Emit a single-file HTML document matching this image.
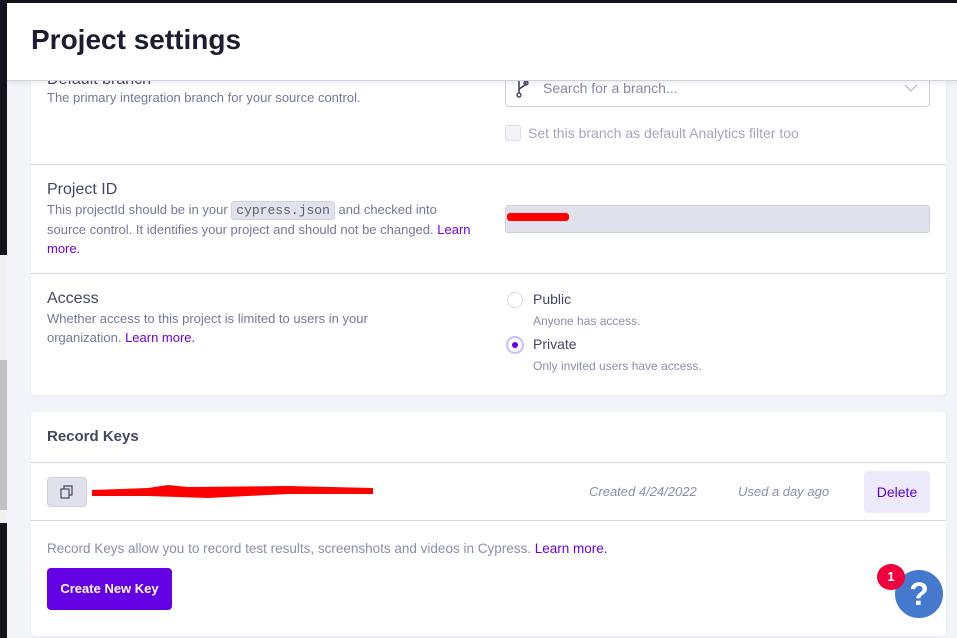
<!DOCTYPE html>
<html><head><style>
*{margin:0;padding:0;box-sizing:border-box}
body{width:957px;height:638px;overflow:hidden;background:#f3f4f9;font-family:"Liberation Sans",sans-serif;position:relative}
.a{position:absolute}
.t{color:#434861;font-size:16px}
.d{color:#747994;font-size:12.5px;line-height:19px}
.l{color:#6c00e5}
.hr{position:absolute;left:31px;width:915px;height:1px;background:#d5d6e6}
</style></head><body>
<div class="a" style="left:0;top:0;width:7px;height:255px;background:#14131d"></div>
<div class="a" style="left:0;top:255px;width:7px;height:268px;background:#f0f0f0"></div>
<div class="a" style="left:0;top:360px;width:7px;height:150px;background:#c1c1c1"></div>
<div class="a" style="left:0;top:523px;width:7px;height:115px;background:#14131d"></div>
<div class="a" style="left:0;top:0;width:957px;height:3px;background:#14131d"></div>

<div class="a" style="left:31px;top:60px;width:915px;height:335px;background:#fff;border-radius:4px;box-shadow:0 1px 2px rgba(0,0,0,.06)"></div>
<div class="a t" style="left:47px;top:71px">Default branch</div>
<div class="a d" style="left:47px;top:88px;font-size:13px">The primary integration branch for your source control.</div>
<div class="a" style="left:505px;top:66px;width:425px;height:41px;border:1px solid #cfd0df;border-radius:4px;background:#fff"></div>
<svg class="a" style="left:516px;top:80px" width="14" height="18" viewBox="0 0 14 18"><path d="M3 1v12M3 10c0-3 7-3 7-8" stroke="#434861" stroke-width="1.6" fill="none"/><circle cx="3" cy="15" r="2" stroke="#434861" stroke-width="1.4" fill="none"/><circle cx="10" cy="3" r="2" stroke="#434861" stroke-width="1.4" fill="none"/></svg>
<div class="a" style="left:543px;top:80px;color:#848aa4;font-size:14px">Search for a branch...</div>
<svg class="a" style="left:904px;top:83px" width="14" height="10"><path d="M1 2l6 6 6-6" stroke="#c8cad8" stroke-width="1.6" fill="none"/></svg>
<div class="a" style="left:505px;top:125px;width:16px;height:16px;border:1px solid #dcdde8;border-radius:3px;background:#f3f4f9"></div>
<div class="a" style="left:528px;top:125px;color:#a3a7bd;font-size:14px">Set this branch as default Analytics filter too</div>
<div class="hr" style="top:164px"></div>

<div class="a t" style="left:47px;top:181px">Project ID</div>
<div class="a d" style="left:47px;top:200px;width:430px;font-size:13px">This projectId should be in your <span style="font-family:'Liberation Mono',monospace;background:#e1e2ec;border:1px solid #d0d1df;border-radius:3px;padding:1px 4px;color:#5a5f78;font-size:13px">cypress.json</span> and checked into source control. It identifies your project and should not be changed. <span class="l">Learn more.</span></div>
<div class="a" style="left:505px;top:205px;width:425px;height:28px;background:#e1e1ec;border:1px solid #d0d1df;border-radius:3px"></div>
<div class="a" style="left:507px;top:213px;width:62px;height:8px;background:#f00;border-radius:3px"></div>
<div class="hr" style="top:273px"></div>

<div class="a t" style="left:47px;top:290px">Access</div>
<div class="a d" style="left:47px;top:309px;width:350px;font-size:13px">Whether access to this project is limited to users in your organization. <span class="l">Learn more.</span></div>
<div class="a" style="left:507px;top:292px;width:16px;height:16px;border:1px solid #d8d9e5;border-radius:50%"></div>
<div class="a t" style="left:533px;top:291px;font-size:14px">Public</div>
<div class="a d" style="left:533px;top:312px;font-size:12px;color:#8a8fa8">Anyone has access.</div>
<div class="a" style="left:506px;top:336px;width:18px;height:18px;border:2px solid #cdbef7;border-radius:50%;background:#fff"></div>
<div class="a" style="left:512px;top:342px;width:6px;height:6px;border-radius:50%;background:#6c00e5"></div>
<div class="a t" style="left:533px;top:336px;font-size:14px">Private</div>
<div class="a d" style="left:533px;top:357px;font-size:12px;color:#8a8fa8">Only invited users have access.</div>

<div class="a" style="left:31px;top:412px;width:915px;height:224px;background:#fff;border-radius:4px;box-shadow:0 1px 2px rgba(0,0,0,.06)"></div>
<div class="a" style="left:47px;top:428px;color:#434861;font-size:15px;font-weight:bold">Record Keys</div>
<div class="hr" style="top:462px"></div>
<div class="a" style="left:47px;top:477px;width:40px;height:30px;background:#e1e1ec;border:1px solid #d0d1df;border-radius:4px"></div>
<svg class="a" style="left:60px;top:485px" width="14" height="14"><rect x="1" y="4" width="8" height="9" fill="none" stroke="#434861" stroke-width="1.2"/><path d="M4 4V1h8v9H9" fill="none" stroke="#434861" stroke-width="1.2"/></svg>
<svg class="a" style="left:88px;top:478px" width="295" height="24"><path d="M4 12 L60 10 L80 7 L100 9 L200 8 L285 10 L285 16 L200 16 L120 20 L60 18 L4 18Z" fill="#f00"/></svg>
<div class="a" style="left:589px;top:484px;color:#8a8fa8;font-size:13px;font-style:italic">Created 4/24/2022</div>
<div class="a" style="left:738px;top:484px;color:#8a8fa8;font-size:13px;font-style:italic">Used a day ago</div>
<div class="a" style="left:864px;top:471px;width:66px;height:42px;background:#eeeafd;border-radius:4px;color:#5a00d0;font-size:14px;text-align:center;line-height:42px">Delete</div>
<div class="hr" style="top:520px"></div>
<div class="a d" style="left:47px;top:539px;font-size:13.5px;color:#8a8fa8">Record Keys allow you to record test results, screenshots and videos in Cypress. <span class="l">Learn more.</span></div>
<div class="a" style="left:47px;top:568px;width:125px;height:42px;background:#6400e4;border-radius:4px;color:#fff;font-size:13px;font-weight:bold;text-align:center;line-height:42px">Create New Key</div>
<div class="a" style="left:893px;top:568px;width:52px;height:52px;border-radius:50%;background:#4479cd;border:2px solid #fff;color:#fff;font-size:32px;font-weight:bold;text-align:center;line-height:48px">?</div>
<div class="a" style="left:877px;top:564px;width:28px;height:26px;border-radius:50%;background:#f0003c;color:#fff;font-size:13px;font-weight:bold;text-align:center;line-height:26px">1</div>

<div class="a" style="left:7px;top:3px;width:950px;height:78px;background:#fff;border-bottom:1px solid #d0d1df;box-shadow:0 2px 6px rgba(0,0,0,.08)"></div>
<div class="a" style="left:31px;top:24px;color:#1b1e2e;font-size:28px;font-weight:bold">Project settings</div>
</body></html>
